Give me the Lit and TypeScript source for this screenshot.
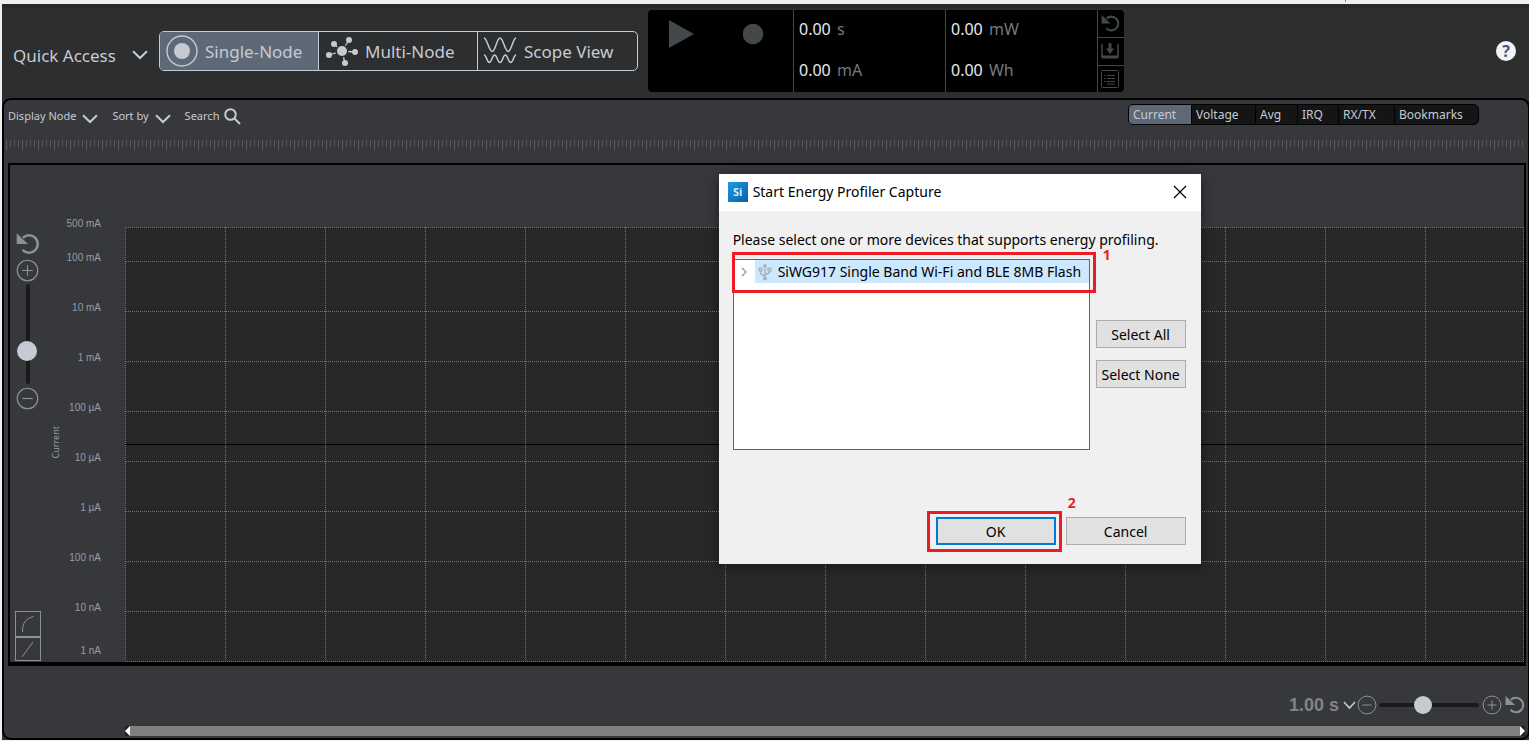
import { LitElement, html, css, svg } from "lit";
import { customElement, state } from "lit/decorators.js";

const MODES = ["Single-Node", "Multi-Node", "Scope View"];
const TABS = ["Current", "Voltage", "Avg", "IRQ", "RX/TX", "Bookmarks"];
const DECADES = ["100 mA", "10 mA", "1 mA", "100 µA", "10 µA", "1 µA", "100 nA", "10 nA"];

const resetIcon = (size: number) => html`
  <svg width=${size} height=${size} viewBox="0 0 24 24" aria-hidden="true">
    <path d="M7 5.8A8.7 8.7 0 1 1 6.6 17.8" fill="none" stroke="currentColor" stroke-width="2.6" />
    <path d="M.7 1.3V12H12Z" fill="currentColor" />
  </svg>`;

const roundIcon = (size: number, plus: boolean) => html`
  <svg width=${size} height=${size} viewBox="0 0 24 24" fill="none" stroke="currentColor" stroke-width="1.2" aria-hidden="true">
    <circle cx="12" cy="12" r="10.7" />
    <path d=${plus ? "M6.5 12h11M12 6.5v11" : "M6.5 12h11"} />
  </svg>`;

const chevron = html`
  <svg width="16" height="10" viewBox="0 0 16 10" fill="none" stroke="currentColor" stroke-width="2" aria-hidden="true">
    <path d="M1 1.2 8 8l7-6.8" />
  </svg>`;

const nodes: [number, number][] = [[24, 5], [9, 9], [4, 20], [20, 28], [30, 17]];

const modeIcons = [
  html`<svg width="32" height="32" viewBox="0 0 32 32" aria-hidden="true">
    <circle cx="16" cy="16" r="15" fill="none" stroke="currentColor" stroke-width="1.4" />
    <circle cx="16" cy="16" r="8" fill="currentColor" />
  </svg>`,
  html`<svg width="33" height="32" viewBox="0 0 33 32" aria-hidden="true">
    ${nodes.map(([x, y]) => svg`
      <path d="M17 16L${x} ${y}" stroke="currentColor" stroke-width="1.3" />
      <circle cx=${x} cy=${y} r="3" fill="currentColor" />`)}
    <circle cx="17" cy="16" r="6.500" fill="#2d2e2f" />
    <circle cx="17" cy="16" r="5" fill="currentColor" />
  </svg>`,
  html`<svg width="33" height="30" viewBox="0 0 33 30" fill="none" stroke="currentColor" stroke-width="1.5" aria-hidden="true">
    <path d="M0 2C3 2 5 15.500 8.200 15.500S12.800 2 16 2S21 15.500 24.200 15.500S29 2 32 2" />
    <path d="M0 19C2.500 19 3 26.500 5.300 26.500S8.300 19 10.600 19S13.600 26.500 16 26.500S19 19 21.300 19S24.300 26.500 26.700 26.500S29.700 19 32 19" />
  </svg>`,
];

@customElement("app-root")
export class AppRoot extends LitElement {
  @state() private mode = 0;
  @state() private tab = 0;

  static styles = css`
    :host {
      display: block;
      font-family: "Noto Sans", "Open Sans", sans-serif;
      font-size: 12px;
      color: #c6cad2;
    }
    * { box-sizing: border-box; }
    button {
      font: inherit;
      color: inherit;
      background: none;
      border: 0;
      padding: 0;
      margin: 0;
      display: flex;
      align-items: center;
      white-space: nowrap;
      cursor: pointer;
    }
    svg { display: block; flex: none; }

    .page {
      position: relative;
      display: flex;
      flex-direction: column;
      height: 100vh;
      min-height: 640px;
      padding: 0 0 1px 2px;
      background: #efefef;
      overflow: hidden;
    }
    .strip {
      display: flex;
      justify-content: flex-end;
      height: 4px;
      flex: none;
      padding-right: 183px;
    }
    .strip-mark { width: 1px; height: 2px; background: #808080; }

    .header {
      display: flex;
      align-items: center;
      height: 94px;
      flex: none;
      padding: 0 13px 4px 11px;
      border-top: 4px solid #2b2728;
      background: #2d2e2f;
    }
    .quick { gap: 16px; font-size: 17px; width: 146px; padding-top: 8px; }
    .modes {
      display: flex;
      height: 40px;
      border: 1px solid #c6cad2;
      border-radius: 5px;
      overflow: hidden;
    }
    .mode {
      width: 159px;
      gap: 7px;
      padding-left: 6px;
      font-size: 17px;
      border-right: 1px solid #c6cad2;
    }
    .mode:last-child { border-right: 0; }
    .mode.on { background: #5e6978; }

    .meter {
      display: flex;
      height: 82px;
      margin-left: 10px;
      background: #000;
      border-radius: 4px;
      overflow: hidden;
    }
    .transport {
      display: flex;
      align-items: flex-start;
      gap: 47px;
      width: 145px;
      padding: 9px 0 0 20px;
      color: #43484a;
    }
    .readouts {
      width: 152px;
      border-left: 1px solid #43484a;
      display: flex;
      flex-direction: column;
      justify-content: space-between;
      padding: 8px 5px 11px;
      font-size: 16px;
      line-height: 22px;
      color: #e8eaed;
    }
    .unit { color: #73797d; margin-left: 2px; }
    .side {
      width: 27px;
      border-left: 1px solid #43484a;
      display: grid;
      grid-template-rows: 1fr 1fr 1fr;
      color: #43484a;
    }
    .side button { justify-content: center; padding-right: 2px; }
    .side button + button { border-top: 1px solid #43484a; }
    .help {
      justify-content: center;
      width: 20px;
      height: 20px;
      margin-left: auto;
      border-radius: 50%;
      background: #f4f4f6;
      color: #46597c;
      font-size: 16px;
      font-weight: 700;
    }

    .stage {
      display: flex;
      flex: 1;
      min-height: 0;
      background: #2d2e2f;
    }
    .panel {
      display: flex;
      flex-direction: column;
      flex: 1;
      min-width: 0;
      margin-right: -1px;
      border: 2px solid #000;
      border-radius: 9px;
      background: #37383c;
    }
    .toolbar {
      display: flex;
      align-items: center;
      height: 32px;
      flex: none;
      padding: 0 49px 0 4px;
      gap: 14px;
    }
    .tool { gap: 6px; font-size: 11px; line-height: 18px; }
    .tool svg { margin-top: 5px; }
    .tool.search { gap: 5px; }
    .tool.search svg { margin-top: 0; }
    .tabs {
      display: grid;
      grid-template-columns: 62px 64px 42px 41px 56px 84px;
      height: 21px;
      margin: -3px 0 0 auto;
      border: 1px solid #000;
      border-radius: 5px;
      background: #151515;
      overflow: hidden;
    }
    .tab { padding-left: 4px; border-left: 1px solid #000; }
    .tab:first-child { border-left: 0; }
    .tab.on { background: #5e6978; }

    .ruler {
      height: 10px;
      flex: none;
      margin: 8px 2px 13px;
      background:
        repeating-linear-gradient(90deg, #5c5d61 0 1px, transparent 1px 16px),
        repeating-linear-gradient(90deg, #55565a 0 1px, transparent 1px 4px) 0 0 / 100% 7px no-repeat;
    }

    .chart {
      display: flex;
      flex: 1;
      min-height: 0;
      margin: 0 2px 0 4px;
      border: 2px solid #000;
      border-bottom-width: 4px;
    }
    .rail {
      display: flex;
      flex-direction: column;
      align-items: center;
      width: 35px;
      padding: 67px 0 1px;
      color: #8d9094;
    }
    .rail button + button { margin-top: 3px; }
    .scale { margin-top: auto; border: 1px solid #8d9094; width: 26px; }
    .scale button { width: 24px; height: 24px; justify-content: center; }
    .rail .scale button + button { margin: 0; border-top: 2px solid #8d9094; }
    .range {
      appearance: none;
      background: transparent;
      margin: 0;
    }
    .range::-webkit-slider-thumb {
      appearance: none;
      border-radius: 50%;
      background: #c6cad2;
    }
    .range::-webkit-slider-runnable-track { background: #1a1a1a; border-radius: 2px; }
    .range.v {
      writing-mode: vertical-lr;
      direction: rtl;
      width: 20px;
      height: 100px;
      margin: 2px 0 3px;
    }
    .range.v::-webkit-slider-runnable-track { width: 4px; height: 100px; }
    .range.v::-webkit-slider-thumb { width: 20px; height: 20px; margin-left: -9px; }
    .range.h { width: 100px; height: 20px; margin: 0 2px; }
    .range.h::-webkit-slider-runnable-track { height: 4px; width: 100px; }
    .range.h::-webkit-slider-thumb { width: 18px; height: 18px; margin-top: -7px; }

    .caption {
      align-self: center;
      writing-mode: vertical-rl;
      transform: rotate(180deg);
      width: 16px;
      margin: 58px 0 0 3px;
      font-size: 9px;
      line-height: 16px;
      text-align: center;
      color: #989a9e;
    }
    .axis {
      display: flex;
      flex-direction: column;
      width: 37px;
      padding: 53px 0 5px;
      font-family: "Liberation Sans", Arial, sans-serif;
      font-size: 10px;
      line-height: 12px;
      color: #9a9ca0;
      text-align: right;
      white-space: nowrap;
    }
    .axis div { flex: 50 0 0; min-height: 0; }
    .axis .first { flex-grow: 34; }
    .axis .short { flex-grow: 43; }
    .axis .last { flex: none; }

    .plot {
      position: relative;
      display: flex;
      flex-direction: column;
      flex: 1;
      margin: 62px 0 0 24px;
      background: #292728;
      border-right: 1px dotted #737373;
      border-bottom: 1px dotted #737373;
    }
    .row { flex: 50 0 0; border-top: 1px dotted #737373; }
    .row.first { flex-grow: 34; }
    .verticals { position: absolute; inset: 0; width: 100%; height: 100%; }
    .cursor { position: absolute; left: 0; right: 0; top: 50%; height: 1px; background: #000; }

    .footer { flex: none; padding: 26px 3px 2px 121px; }
    .zoom {
      display: flex;
      align-items: center;
      justify-content: flex-end;
      height: 26px;
      color: #8d9094;
    }
    .zoom button { margin-left: 1px; }
    .zoom .span {
      gap: 4px;
      font-family: "Liberation Sans", Arial, sans-serif;
      font-size: 18px;
      font-weight: 700;
      color: #828386;
    }
    .span svg { color: #c6cad2; }
    .zoom .reset { margin-left: 3px; }
    .scroll {
      display: flex;
      justify-content: space-between;
      height: 10px;
      margin-top: 8px;
      background: #808080;
    }
    .scroll button { width: 5px; background: #222; color: #fff; }

    .dialog {
      position: absolute;
      left: 47%;
      top: 174px;
      width: 482px;
      background: #f0f0f0;
      color: #000;
      font-size: 14px;
      line-height: 20px;
      box-shadow: 0 2px 12px rgba(0, 0, 0, 0.45);
    }
    .title {
      display: flex;
      align-items: center;
      gap: 5px;
      height: 37px;
      padding: 0 14px 1px 9px;
      background: #fff;
    }
    .logo {
      display: grid;
      place-items: center;
      width: 20px;
      height: 20px;
      font-size: 11px;
      font-weight: 700;
      color: #d5ecfa;
      background: linear-gradient(135deg, #1f9be0, #0462a8);
    }
    .close { margin-left: auto; }
    .body { padding: 19px 15px 19px 14px; }
    .prompt { margin: 0; white-space: nowrap; }
    .pick { display: flex; gap: 6px; margin-top: 9px; }
    .list {
      flex: 1;
      min-width: 0;
      height: 191px;
      margin: 0;
      padding: 0;
      list-style: none;
      border: 1px solid #646464;
      background: #fff;
    }
    .item { display: flex; align-items: center; height: 23px; white-space: nowrap; }
    .expand { width: 21px; justify-content: center; color: #a0a0a0; }
    .device {
      display: flex;
      align-items: center;
      flex: 1;
      min-width: 0;
      height: 23px;
      gap: 5px;
      padding-left: 2px;
      background: #cce8ff;
      overflow: hidden;
    }
    .choices { display: flex; flex-direction: column; gap: 12px; width: 90px; padding-top: 61px; }
    .push {
      justify-content: center;
      height: 28px;
      padding-top: 2px;
      border: 1px solid #adadad;
      background: #e1e1e1;
    }
    .actions { display: flex; justify-content: flex-end; gap: 10px; margin-top: 67px; }
    .actions .push { width: 120px; }
    .actions .ok { border: 2px solid #0078d7; }
    .mark { position: absolute; border: 3px solid #ed1c24; pointer-events: none; }
    .mark.one { left: 13px; top: 78px; width: 364px; height: 41px; }
    .mark.two { left: 208px; top: 337px; width: 135px; height: 41px; }
    .num { position: absolute; color: #ed1c24; font-weight: 700; line-height: 12px; }
    .num.one { left: 384px; top: 75px; }
    .num.two { left: 349px; top: 323px; }
  `;

  private readout(value: string, unit: string) {
    return html`<div>${value} <span class="unit">${unit}</span></div>`;
  }

  private renderHeader() {
    return html`
      <header class="header">
        <button class="quick">Quick Access ${chevron}</button>
        <div class="modes">
          ${MODES.map((label, i) => html`
            <button class="mode ${i === this.mode ? "on" : ""}" @click=${() => (this.mode = i)}>
              ${modeIcons[i]}${label}
            </button>`)}
        </div>
        <div class="meter">
          <div class="transport">
            <button aria-label="Play">
              <svg width="28" height="30" viewBox="0 0 28 30"><path d="M1 1v28l25-14z" fill="currentColor" /></svg>
            </button>
            <button aria-label="Record">
              <svg width="22" height="30" viewBox="0 0 22 30"><circle cx="10" cy="15" r="10.300" fill="currentColor" /></svg>
            </button>
          </div>
          <div class="readouts">${this.readout("0.00", "s")}${this.readout("0.00", "mA")}</div>
          <div class="readouts">${this.readout("0.00", "mW")}${this.readout("0.00", "Wh")}</div>
          <div class="side">
            <button aria-label="Reset">${resetIcon(19)}</button>
            <button aria-label="Save">
              <svg width="18" height="18" viewBox="0 0 18 18" fill="none" stroke="currentColor">
                <path d="M1 2v13h16V2" stroke-width="1.500" /><path d="M1 15h16" stroke-width="3" />
                <path d="M9 1v6" stroke-width="3" /><path d="M5 6.500h8L9 12z" fill="currentColor" stroke="none" />
              </svg>
            </button>
            <button aria-label="Log">
              <svg width="18" height="18" viewBox="0 0 18 18" fill="none" stroke="currentColor">
                <rect x=".5" y=".5" width="17" height="17" rx="1" />
                <path d="M6 5.500h8M6 8.500h8M6 11.500h8M6 14h8M3 5.500h1.500M3 8.500h1.500M3 11.500h1.500" />
              </svg>
            </button>
          </div>
        </div>
        <button class="help" aria-label="Help">?</button>
      </header>`;
  }

  private renderChart() {
    return html`
      <section class="chart">
        <div class="rail">
          <button aria-label="Reset current axis">${resetIcon(24)}</button>
          <button aria-label="Zoom in current">${roundIcon(23, true)}</button>
          <input class="range v" type="range" min="0" max="80" value="23" aria-label="Current zoom" />
          <button aria-label="Zoom out current">${roundIcon(23, false)}</button>
          <div class="scale">
            <button aria-label="Logarithmic scale">
              <svg width="14" height="18" viewBox="0 0 14 18" fill="none" stroke="currentColor"><path d="M1.500 17C1.500 8 4 4 12.500 1.500" /></svg>
            </button>
            <button aria-label="Linear scale">
              <svg width="14" height="18" viewBox="0 0 14 18" fill="none" stroke="currentColor"><path d="M1 17 12 2" /></svg>
            </button>
          </div>
        </div>
        <div class="caption">Current</div>
        <div class="axis">
          <div class="first">500 mA</div>
          ${DECADES.map((d, i) => html`<div class=${i === DECADES.length - 1 ? "short" : ""}>${d}</div>`)}
          <div class="last">1 nA</div>
        </div>
        <div class="plot">
          <div class="row first"></div>
          ${DECADES.map(() => html`<div class="row"></div>`)}
          <svg class="verticals" aria-hidden="true">
            <defs>
              <pattern id="dots" width="100" height="2" patternUnits="userSpaceOnUse">
                <rect width="1" height="1" fill="#737373" />
              </pattern>
            </defs>
            <rect width="100%" height="100%" fill="url(#dots)" />
          </svg>
          <div class="cursor"></div>
        </div>
      </section>`;
  }

  private renderDialog() {
    return html`
      <div class="dialog" role="dialog" aria-labelledby="dialog-title">
        <div class="title">
          <span class="logo">Si</span>
          <span id="dialog-title">Start Energy Profiler Capture</span>
          <button class="close" aria-label="Close">
            <svg width="14" height="14" viewBox="0 0 14 14" stroke="#000" stroke-width="1.200"><path d="M1 1l12 12M13 1 1 13" /></svg>
          </button>
        </div>
        <div class="body">
          <p class="prompt">Please select one or more devices that supports energy profiling.</p>
          <div class="pick">
            <ul class="list">
              <li class="item">
                <button class="expand" aria-label="Expand">
                  <svg width="6" height="10" viewBox="0 0 6 10" fill="none" stroke="currentColor" stroke-width="1.500"><path d="M1 1l4 4-4 4" /></svg>
                </button>
                <span class="device">
                  <svg width="16" height="18" viewBox="0 0 16 18" fill="none" stroke="#a9b2b9" stroke-width="1.500">
                    <path d="M8 3v12M8 13.500 3.500 10.500V7M8 12l4.500-2.500V7" />
                    <path d="M8 0l2.500 4h-5z" fill="#a9b2b9" stroke="none" />
                    <circle cx="3.500" cy="6.500" r="1.600" /><circle cx="12.500" cy="6.500" r="1.600" />
                    <circle cx="8" cy="15.500" r="1.300" fill="#a9b2b9" />
                  </svg>
                  SiWG917 Single Band Wi-Fi and BLE 8MB Flash
                </span>
              </li>
            </ul>
            <div class="choices">
              <button class="push">Select All</button>
              <button class="push">Select None</button>
            </div>
          </div>
          <div class="actions">
            <button class="push ok">OK</button>
            <button class="push">Cancel</button>
          </div>
        </div>
        <div class="mark one"></div>
        <div class="mark two"></div>
        <span class="num one">1</span>
        <span class="num two">2</span>
      </div>`;
  }

  render() {
    return html`
      <div class="page">
        <div class="strip"><span class="strip-mark"></span></div>
        ${this.renderHeader()}
        <div class="stage">
          <main class="panel">
            <div class="toolbar">
              <button class="tool">Display Node ${chevron}</button>
              <button class="tool">Sort by ${chevron}</button>
              <button class="tool search">Search
                <svg width="17" height="17" viewBox="0 0 17 17" fill="none" stroke="currentColor" stroke-width="2" aria-hidden="true">
                  <circle cx="6.500" cy="6.500" r="5.300" /><path d="M10.500 10.500 16 16" />
                </svg>
              </button>
              <div class="tabs">
                ${TABS.map((label, i) => html`
                  <button class="tab ${i === this.tab ? "on" : ""}" @click=${() => (this.tab = i)}>${label}</button>`)}
              </div>
            </div>
            <div class="ruler"></div>
            ${this.renderChart()}
            <footer class="footer">
              <div class="zoom">
                <button class="span">1.00 s
                  <svg width="13" height="9" viewBox="0 0 13 9" fill="none" stroke="currentColor" stroke-width="1.600"><path d="M1 1l5.500 6L12 1" /></svg>
                </button>
                <button aria-label="Zoom out time">${roundIcon(20, false)}</button>
                <input class="range h" type="range" min="0" max="82" value="35" aria-label="Time zoom" />
                <button aria-label="Zoom in time">${roundIcon(20, true)}</button>
                <button class="reset" aria-label="Reset time axis">${resetIcon(20)}</button>
              </div>
              <div class="scroll">
                <button aria-label="Scroll left"><svg width="5" height="10" viewBox="0 0 5 10"><path d="M5 0v10L0 5z" fill="currentColor" /></svg></button>
                <button aria-label="Scroll right"><svg width="5" height="10" viewBox="0 0 5 10"><path d="M0 0v10l5-5z" fill="currentColor" /></svg></button>
              </div>
            </footer>
          </main>
        </div>
        ${this.renderDialog()}
      </div>`;
  }
}
